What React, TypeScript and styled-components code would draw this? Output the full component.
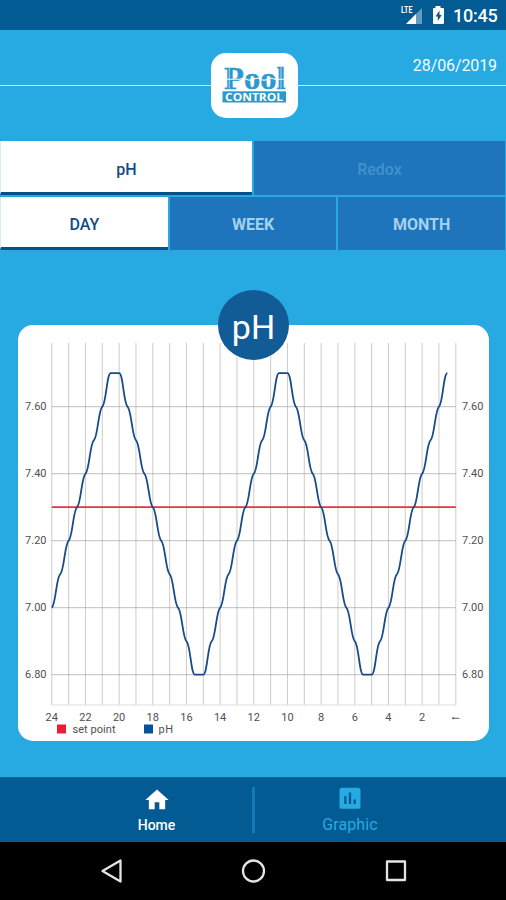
import React from "react";
import styled, { createGlobalStyle } from "styled-components";

const GlobalStyle = createGlobalStyle`
  * { box-sizing: border-box; }
  body { margin: 0; background: #27aae1; }
`;

const Screen = styled.div`
  width: 506px;
  height: 900px;
  display: flex;
  flex-direction: column;
  overflow: hidden;
  background: #27aae1;
  font-family: Roboto, "Liberation Sans", sans-serif;
`;

const StatusBar = styled.div`
  height: 30px;
  flex: none;
  display: flex;
  justify-content: flex-end;
  padding-right: 9px;
  background: #025b93;
  color: #fff;
`;

const StatusIcons = styled.svg`
  width: 50px;
  height: 30px;
  margin-right: 3px;
`;

const Clock = styled.span`
  width: 44px;
  font-size: 18px;
  font-weight: 500;
  line-height: 32px;
  letter-spacing: -0.25px;
  white-space: nowrap;
`;

const Header = styled.header`
  height: 111px;
  flex: none;
  display: grid;
  grid-template-columns: 211px 87px 1fr;
`;

const HeaderSide = styled.div`
  height: 56px;
  border-bottom: 1px solid #c5e9f8;
  padding: 25px 9px 0 0;
  text-align: right;
  color: #f2fbff;
  font-size: 16px;
  line-height: 21px;
  letter-spacing: -0.1px;
`;

const LogoTile = styled.div`
  margin-top: 23px;
  width: 87px;
  height: 65px;
  border-radius: 15px;
  background: #fff;
`;

const TabRow = styled.div<{ $height: number }>`
  height: ${(p) => p.$height}px;
  flex: none;
  display: flex;
  gap: 2px;
  margin-bottom: 2px;
  padding-right: 1px;
`;

const Tab = styled.button<{ $active?: boolean; $dim?: boolean }>`
  flex: 1 1 0;
  border: 0;
  border-left: ${(p) => (p.$active ? "1px solid #d8edf8" : "0")};
  border-bottom: ${(p) => (p.$active ? "3.5px solid #03508a" : "0")};
  padding: ${(p) => (p.$active ? "5px 0 0" : "2px 0 0")};
  background: ${(p) => (p.$active ? "#fff" : "#1e75bb")};
  color: ${(p) => (p.$active ? "#104b87" : p.$dim ? "#4291ce" : "#a5d0f0")};
  font: ${(p) => (p.$active || p.$dim ? 500 : 700)} 16px Roboto, sans-serif;
`;

const Main = styled.main`
  flex: 1;
  padding: 73px 17px 0 18px;
`;

const Card = styled.section`
  position: relative;
  height: 416px;
  border-radius: 15px;
  background: #fff;
`;

const Badge = styled.div`
  position: absolute;
  top: -35px;
  left: 200px;
  width: 71px;
  height: 70px;
  border-radius: 50%;
  background: #115b97;
  color: #fff;
  font-size: 34px;
  line-height: 74px;
  text-align: center;
`;

const Chart = styled.svg`
  display: block;
  width: 471px;
  height: 416px;
`;

const Tick = styled.text`
  font: 11px Roboto, sans-serif;
  fill: #505050;
`;

const BottomNav = styled.nav`
  height: 65px;
  flex: none;
  display: flex;
  align-items: center;
  justify-content: center;
  background: #025b93;
  border-top: 1px solid #0a6aa4;
`;

const NavItem = styled.div<{ $active?: boolean }>`
  width: 192px;
  height: 64px;
  display: flex;
  flex-direction: column;
  align-items: center;
  color: ${(p) => (p.$active ? "#fff" : "#27aae1")};
  font-size: ${(p) => (p.$active ? 14 : 16)}px;
  font-weight: ${(p) => (p.$active ? 500 : 400)};
  line-height: 20px;
  letter-spacing: ${(p) => (p.$active ? 0 : 0.1)}px;
  padding-left: ${(p) => (p.$active ? 2 : 0)}px;
  padding-right: ${(p) => (p.$active ? 0 : 1)}px;
`;

const NavIcon = styled.svg`
  width: 28px;
  height: 28px;
  margin: 8px 0 1px;
  fill: currentColor;
`;

const NavDivider = styled.div`
  width: 3px;
  height: 46px;
  background: #167bb3;
`;

const SystemBar = styled.div`
  height: 58px;
  flex: none;
  background: #000;
`;

const SystemIcons = styled.svg`
  display: block;
  width: 506px;
  height: 58px;
  fill: none;
  stroke: #e4e4e4;
  stroke-width: 2.3;
`;

// Plot coordinates are relative to the card.
const LEFT = 33.8;
const RIGHT = 437.8;
const TOP = 18;
const BOTTOM = 380;
const xAt = (hour: number) => LEFT + ((24 - hour) * (RIGHT - LEFT)) / 24;
const yAt = (value: number) => 282.7 - (value - 7) * 335;

const readings: number[] = [
  7.0, 7.1, 7.2, 7.3, 7.4, 7.5, 7.6, 7.7,
  7.7, 7.6, 7.5, 7.4, 7.3, 7.2, 7.1, 7.0, 6.9, 6.8,
  6.8, 6.9, 7.0, 7.1, 7.2, 7.3, 7.4, 7.5, 7.6, 7.7,
  7.7, 7.6, 7.5, 7.4, 7.3, 7.2, 7.1, 7.0, 6.9, 6.8,
  6.8, 6.9, 7.0, 7.1, 7.2, 7.3, 7.4, 7.5, 7.6, 7.7,
];

const isPlateau = (value: number) => value === 7.7 || value === 6.8;

// Segments leave each reading with a gentle slope, and plateaus flat.
const curve = readings
  .map((value, i) => {
    const x = xAt(24 - i / 2);
    const y = yAt(value);
    if (i === 0) return `M${x} ${y}`;
    const prev = readings[i - 1];
    const prevX = xAt(24 - (i - 1) / 2);
    const prevY = yAt(prev);
    const dx = x - prevX;
    const dy = y - prevY;
    const c1y = prevY + (isPlateau(prev) ? 0 : dy * 0.09);
    const c2y = y - (isPlateau(value) ? 0 : dy * 0.09);
    return `C${prevX + dx * 0.47} ${c1y} ${x - dx * 0.47} ${c2y} ${x} ${y}`;
  })
  .join(" ");

const hours = Array.from({ length: 25 }, (_, i) => 24 - i);
const levels = [7.6, 7.4, 7.2, 7.0, 6.8];

function Logo() {
  return (
    <LogoTile>
      <svg width="87" height="65" viewBox="0 0 87 65">
        <text x="13" y="36" textLength="61.5" lengthAdjust="spacingAndGlyphs" fontFamily="Liberation Serif, serif" fontWeight="700" fontSize="32" fill="#2b98d0" stroke="#2b98d0" strokeWidth=".4">Pool</text>
        <path d="M12 26.2h17q3-1.8 6.5 0t7 0 7 0 7 0 7 0h12" stroke="#fff" strokeWidth="1.1" fill="none" />
        <path d="M18.3 15v20.5M70 14v21.5" stroke="#fff" strokeWidth=".6" />
        <rect x="11.5" y="38.3" width="63.5" height="11.2" fill="#2b98d0" />
        <text x="14" y="47.5" textLength="58" lengthAdjust="spacingAndGlyphs" fontFamily="Open Sans, sans-serif" fontWeight="700" fontSize="10" fill="#fff">CONTROL</text>
      </svg>
    </LogoTile>
  );
}

function PhChart() {
  return (
    <Chart viewBox="0 0 471 416">
      {hours.map((h) => (
        <line key={h} x1={xAt(h)} x2={xAt(h)} y1={TOP} y2={BOTTOM} stroke="#9a9a9a" strokeOpacity=".5" />
      ))}
      {levels.map((v) => (
        <g key={v}>
          <line x1={LEFT} x2={RIGHT} y1={yAt(v)} y2={yAt(v)} stroke="#999" strokeOpacity=".65" />
          <Tick x="28.5" y={yAt(v) + 3} textAnchor="end">{v.toFixed(2)}</Tick>
          <Tick x="444" y={yAt(v) + 3}>{v.toFixed(2)}</Tick>
        </g>
      ))}
      <line x1={LEFT} x2={RIGHT} y1={BOTTOM} y2={BOTTOM} stroke="#ddd" />
      <line x1={LEFT} x2={RIGHT} y1={yAt(7.3)} y2={yAt(7.3)} stroke="#ea3040" strokeWidth="1.7" />
      <path d={curve} fill="none" stroke="#174c88" strokeWidth="1.8" strokeLinejoin="round" />
      {hours.filter((h) => h % 2 === 0 && h > 0).map((h) => (
        <Tick key={h} x={xAt(h)} y="395.5" textAnchor="middle">{h}</Tick>
      ))}
      <path d="M434 393.3h7.5M434.3 393.3l1.5-.7v1.4z" stroke="#666" fill="#666" />
      <rect x="39" y="399.5" width="9" height="9" fill="#ed1c34" />
      <Tick x="54.5" y="408" textLength="43">set point</Tick>
      <rect x="126" y="399.5" width="9" height="9" fill="#04529a" />
      <Tick x="140.5" y="408" textLength="14.5">pH</Tick>
    </Chart>
  );
}

export default function App() {
  return (
    <Screen>
      <GlobalStyle />
      <StatusBar>
        <StatusIcons viewBox="400 0 50 30" fill="#fff">
          <path d="M422 8v16h-16z" fillOpacity=".4" />
          <path d="M416 14v10h-10z" />
          <text x="401" y="13.3" fontFamily="Roboto, sans-serif" fontWeight="700" fontSize="9.5" textLength="11.5" lengthAdjust="spacingAndGlyphs">LTE</text>
          <path d="M435.5 6h5v2h2.5q1 0 1 1v14q0 1-1 1h-9q-1 0-1-1V9q0-1 1-1h1.5z" />
          <path d="M439.5 10.5l-4 6h2.3v4.5l4-6h-2.3z" fill="#025b93" />
        </StatusIcons>
        <Clock>10:45</Clock>
      </StatusBar>
      <Header>
        <HeaderSide />
        <Logo />
        <HeaderSide>28/06/2019</HeaderSide>
      </Header>
      <TabRow $height={54}>
        <Tab $active>pH</Tab>
        <Tab $dim>Redox</Tab>
      </TabRow>
      <TabRow $height={53}>
        <Tab $active>DAY</Tab>
        <Tab>WEEK</Tab>
        <Tab>MONTH</Tab>
      </TabRow>
      <Main>
        <Card>
          <PhChart />
          <Badge>pH</Badge>
        </Card>
      </Main>
      <BottomNav>
        <NavItem $active>
          <NavIcon viewBox="0 0 24 24">
            <path d="M10 20v-6h4v6h5v-8h3L12 3 2 12h3v8z" />
          </NavIcon>
          Home
        </NavItem>
        <NavDivider />
        <NavItem>
          <NavIcon viewBox="0 1.5 24 24">
            <path d="M19 3H5c-1.1 0-2 .9-2 2v14c0 1.1.9 2 2 2h14c1.1 0 2-.9 2-2V5c0-1.1-.9-2-2-2zM9 17H7v-7h2v7zm4 0h-2V7h2v10zm4 0h-2v-4h2v4z" />
          </NavIcon>
          Graphic
        </NavItem>
      </BottomNav>
      <SystemBar>
        <SystemIcons viewBox="0 842 506 58">
          <path d="M120.5 860.5v21L102.5 871z" strokeLinejoin="round" />
          <circle cx="253.5" cy="871" r="10.5" />
          <rect x="387" y="861.5" width="18" height="18.5" strokeLinejoin="round" />
        </SystemIcons>
      </SystemBar>
    </Screen>
  );
}
